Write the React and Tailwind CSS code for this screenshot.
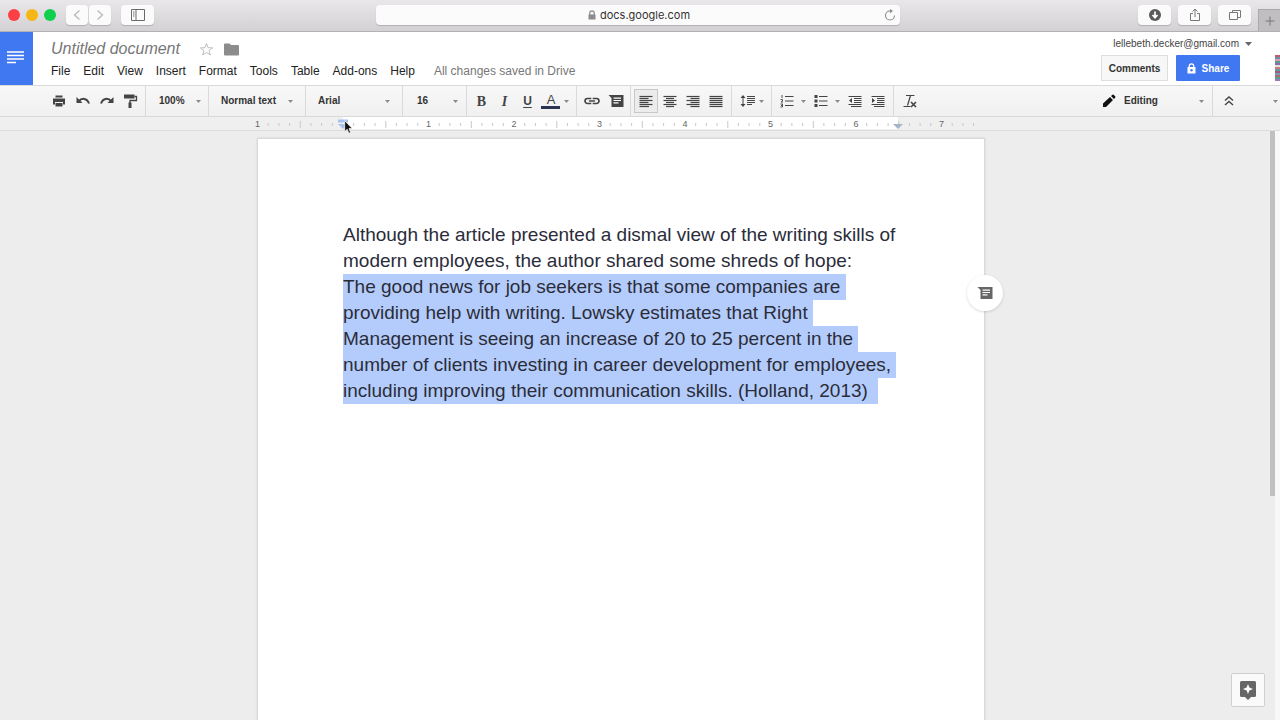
import React from "react";

const Caret = ({ className = "" }) => (
  <svg width="5" height="3" viewBox="0 0 5 3" className={"shrink-0 " + className} aria-hidden="true">
    <path d="M0 0h5L2.5 3z" fill="#8a8a8a" />
  </svg>
);

const Icon = ({ children, size = 16 }) => (
  <svg width={size} height={size} viewBox="0 0 16 16" fill="none" stroke="#444" aria-hidden="true" className="shrink-0">
    {children}
  </svg>
);

const Lines = ({ rows }) => (
  <Icon>
    {rows.map(([x1, x2], i) => (
      <path key={i} d={`M${x1} ${3.5 + i * 2}H${x2}`} strokeWidth="1.2" />
    ))}
  </Icon>
);

const alignLeft = [[1.5, 14.5], [1.5, 10.5], [1.5, 14.5], [1.5, 10.5], [1.5, 14.5], [1.5, 11]];
const alignCenter = [[1.5, 14.5], [4, 12], [1.5, 14.5], [4, 12], [1.5, 14.5], [4, 12]];
const alignRight = [[1.5, 14.5], [5.5, 14.5], [1.5, 14.5], [5.5, 14.5], [1.5, 14.5], [5.5, 14.5]];
const alignJustify = [[1.5, 14.5], [1.5, 14.5], [1.5, 14.5], [1.5, 14.5], [1.5, 14.5], [1.5, 14.5]];

const Tool = ({ label, children, className = "w-[23px]" }) => (
  <button type="button" aria-label={label} className={"flex h-6 shrink-0 items-center justify-center text-[#444] " + className}>
    {children}
  </button>
);

const Group = ({ children, className = "" }) => (
  <div className={"flex h-full shrink-0 items-center border-l border-[#dadada] " + className}>{children}</div>
);

const Pick = ({ label, value, className }) => (
  <Group className={className}>
    <select
      aria-label={label}
      defaultValue={value}
      className="min-w-0 flex-1 appearance-none bg-transparent text-[10px] font-bold leading-4 text-[#333] outline-none"
    >
      <option>{value}</option>
    </select>
    <Caret />
  </Group>
);

const CommentGlyph = ({ fill = "#444" }) => (
  <svg width="16" height="14" viewBox="0 0 16 14" aria-hidden="true">
    <path d="M.5 1H15.500V13H3.500V4z" fill={fill} />
    <path d="M5.500 4.200h7.500M5.500 6.500h7.500M5.500 8.800h5" stroke="#fff" strokeWidth="1.200" />
  </svg>
);

const Ruler = () => {
  const unit = 85.5;
  const ticks = [];
  for (let i = -8; i <= 60; i++) {
    const x = 86 + (i * unit) / 8;
    if (i % 8 === 0 || x > 727) continue;
    const half = i % 4 === 0;
    ticks.push(<path key={i} d={`M${x.toFixed(1)} ${half ? 4 : 6}V${half ? 11 : 9}`} />);
  }
  return (
    <svg width="728" height="13" viewBox="0 0 728 13" className="overflow-visible" aria-label="Ruler">
      <rect x="86" y="0" width="555" height="12" fill="#fff" />
      <g stroke="#c8c8c8">{ticks}</g>
      <g fill="#666" fontSize="9" textAnchor="middle" fontFamily="Liberation Sans, Arial, sans-serif">
        {[-1, 1, 2, 3, 4, 5, 6, 7].map((n) => (
          <text key={n} x={86 + n * unit} y="10">{Math.abs(n)}</text>
        ))}
      </g>
      <path d="M81 2.500h10v3H81z" fill="#a9c1ee" />
      <path d="M81 7h10l-5 5z" fill="#a9c1ee" />
      <path d="M636 7h10l-5 5z" fill="#a3b5cb" />
    </svg>
  );
};

const menus = ["File", "Edit", "View", "Insert", "Format", "Tools", "Table", "Add-ons", "Help"];
const quote = [
  "The good news for job seekers is that some companies are ",
  "providing help with writing. Lowsky estimates that Right ",
  "Management is seeing an increase of 20 to 25 percent in the ",
  "number of clients investing in career development for employees, ",
  "including improving their communication skills. (Holland, 2013)  ",
];
const avatarStripes = ["#c25b6a", "#6a8fb0", "#d9a0a8", "#5b9a8b", "#8a6fb0", "#e8e0e0", "#d07a80", "#5f9ea0", "#a05a78", "#7a9ac0", "#b0686a", "#58a08c", "#9a7ab8"];

const chromeButton =
  "flex h-5 items-center justify-center rounded-[4px] bg-[#fbfbfb] shadow-[0_1px_1px_rgba(0,0,0,0.18)]";

function BrowserBar() {
  return (
    <div className="flex h-8 shrink-0 items-center justify-between border-b border-[#b3b1b3] bg-linear-to-b from-[#e9e7e9] to-[#d3d1d3]">
      <div className="mb-[2px] flex flex-1 items-center pl-2">
        <div className="flex gap-[6px]">
          <button type="button" aria-label="Close" className="size-3 rounded-full bg-[#fc3f44]" />
          <button type="button" aria-label="Minimize" className="size-3 rounded-full bg-[#f5b713]" />
          <button type="button" aria-label="Zoom" className="size-3 rounded-full bg-[#10cf4d]" />
        </div>
        <div className="ml-[10px] flex gap-px">
          <button type="button" aria-label="Back" className={chromeButton + " w-[22px]"}>
            <svg width="8" height="12" viewBox="0 0 8 12" fill="none" stroke="#b8b8b8" strokeWidth="1.300"><path d="M6.500 1.500 1.500 6l5 4.500" /></svg>
          </button>
          <button type="button" aria-label="Forward" className={chromeButton + " w-[22px]"}>
            <svg width="8" height="12" viewBox="0 0 8 12" fill="none" stroke="#b8b8b8" strokeWidth="1.300"><path d="M1.500 1.500 6.500 6l-5 4.500" /></svg>
          </button>
        </div>
        <button type="button" aria-label="Show sidebar" className={chromeButton + " ml-[10px] w-[33px]"}>
          <svg width="14" height="12" viewBox="0 0 14 12" fill="none" stroke="#6a6a6a"><path d="M.5.5h13v11H.5zM5 .5v11M2 3h1.500M2 5h1.500M2 7h1.500" /></svg>
        </button>
      </div>
      <div className="mb-[2px] flex h-5 w-[41%] items-center rounded-[4px] bg-[#fbfbfb] px-1 shadow-[0_1px_1px_rgba(0,0,0,0.18)]">
        <div className="flex flex-1 items-center justify-center gap-1 pl-4">
          <svg width="8" height="10" viewBox="0 0 8 10" aria-hidden="true">
            <path d="M1.800 5V3a2.200 2.200 0 0 1 4.400 0v2" fill="none" stroke="#8a8a8a" strokeWidth="1.200" />
            <path d="M.5 4.500h7v5h-7z" fill="#8a8a8a" />
          </svg>
          <input aria-label="Address" defaultValue="docs.google.com" className="w-[92px] bg-transparent font-['Inter',sans-serif] text-[11px] leading-4 text-[#333] outline-none" />
        </div>
        <button type="button" aria-label="Reload" className="flex size-3">
          <svg width="12" height="12" viewBox="0 0 12 12" fill="none" stroke="#8a8a8a" strokeWidth="1.100"><path d="M6 2a4.500 4.500 0 1 0 4.500 4.500" /><path d="M6 0l3 2-3 2.200z" fill="#8a8a8a" stroke="none" /></svg>
        </button>
      </div>
      <div className="flex h-full flex-1 items-center justify-end gap-[7px] pl-3">
        <button type="button" aria-label="Downloads" className={chromeButton + " mb-[2px] w-[33px]"}>
          <svg width="12" height="12" viewBox="0 0 12 12"><circle cx="6" cy="6" r="6" fill="#5a5a5a" /><path d="M6 2.500V8M3.500 6 6 8.700 8.500 6" fill="none" stroke="#fff" strokeWidth="1.700" /></svg>
        </button>
        <button type="button" aria-label="Share page" className={chromeButton + " mb-[2px] w-[33px]"}>
          <svg width="12" height="14" viewBox="0 0 12 14" fill="none" stroke="#777"><path d="M4 5.500H1.500v7h9v-7H8M6 9V1.500M3.500 3.500 6 1l2.500 2.500" /></svg>
        </button>
        <button type="button" aria-label="Show tabs" className={chromeButton + " mb-[2px] w-[33px]"}>
          <svg width="12" height="12" viewBox="0 0 12 12" fill="none" stroke="#777"><path d="M.5 3.500h8v7h-8zM3.500 3.500v-2h8v7h-3" /></svg>
        </button>
        <button type="button" aria-label="New tab" className="flex h-[22px] w-[22px] items-center justify-center self-end border-l border-t border-[#aaa8aa] bg-[#c0bec0]">
          <svg width="10" height="10" viewBox="0 0 10 10" fill="none" stroke="#777"><path d="M5 .5v9M.5 5h9" /></svg>
        </button>
      </div>
    </div>
  );
}

function DocsHeader() {
  return (
    <header className="flex h-[53px] shrink-0 bg-white">
      <a href="#home" aria-label="Docs home" className="flex w-[33px] shrink-0 justify-center bg-[#4078f2] pt-[19px] pr-[2px]">
        <svg width="17" height="14" viewBox="0 0 17 14" stroke="#fff" strokeWidth="1.600"><path d="M0 1h17M0 4.500h17M0 8h17M0 11.500h9" /></svg>
      </a>
      <div className="flex flex-1 flex-col pl-[18px] pt-[7px]">
        <div className="flex h-5 items-center">
          <input aria-label="Document title" defaultValue="Untitled document" className="w-[148px] bg-transparent text-[16px] italic leading-5 text-[#777] outline-none" />
          <button type="button" aria-label="Star">
            <svg width="15" height="15" viewBox="0 0 15 15" fill="none" stroke="#bdbdbd"><path d="M7.500 1.500l1.600 4.200 4.500.2-3.500 2.800 1.200 4.300-3.800-2.500L3.700 13l1.200-4.300L1.400 5.900l4.500-.2z" /></svg>
          </button>
          <button type="button" aria-label="Move to folder" className="ml-[10px]">
            <svg width="15" height="13" viewBox="0 0 15 13"><path d="M0 1.500Q0 .5 1 .5h4.500L7 2h7q1 0 1 1v8.500q0 1-1 1H1q-1 0-1-1z" fill="#8c8c8c" /></svg>
          </button>
        </div>
        <nav className="flex items-center gap-[13px] text-[12px] leading-6 text-[#222]">
          {menus.map((m) => (
            <button key={m} type="button">{m}</button>
          ))}
          <span className="ml-[6px] text-[#777]">All changes saved in Drive</span>
        </nav>
      </div>
      <div className="flex flex-col items-end pr-[23px] pt-1">
        <button type="button" className="flex items-center gap-[6px] text-[10px] leading-4 text-[#444]">
          lellebeth.decker@gmail.com
          <svg width="7" height="4" viewBox="0 0 7 4" aria-hidden="true"><path d="M0 0h7L3.500 4z" fill="#666" /></svg>
        </button>
        <div className="mr-3 mt-[3px] flex gap-2">
          <button type="button" className="h-[26px] w-[67px] border border-[#dedede] bg-[#f7f7f7] text-[10px] font-bold text-[#333]">Comments</button>
          <button type="button" className="flex h-[26px] w-16 items-center justify-center gap-[6px] rounded-[1px] bg-[#4078f2] text-[10px] font-bold text-white">
            <svg width="9" height="11" viewBox="0 0 9 11" aria-hidden="true"><path d="M2.300 5V3a2.200 2.200 0 0 1 4.400 0v2" fill="none" stroke="#fff" strokeWidth="1.200" /><path d="M.5 4h8v6.500h-8z" fill="#fff" /><circle cx="4.500" cy="7.200" r="1.200" fill="#4078f2" /></svg>
            Share
          </button>
        </div>
      </div>
      <button type="button" aria-label="Account" className="flex w-[5px] shrink-0 pt-[23px]">
        <svg width="5" height="26" viewBox="0 0 5 26" aria-hidden="true">
          {avatarStripes.map((color, i) => (
            <path key={i} d={`M0 ${i * 2}h5v2H0z`} fill={color} />
          ))}
        </svg>
      </button>
    </header>
  );
}

function Toolbar() {
  return (
    <div role="toolbar" aria-label="Formatting" className="flex h-8 shrink-0 items-center border-y border-[#d9d9d9] bg-linear-to-b from-[#f8f8f8] to-[#f0f0f0]">
      <div className="flex w-[145px] shrink-0 pl-[47px]">
        <Tool label="Print" className="w-6">
          <Icon><path d="M4.500 2.500h7v2h-7z" fill="#444" stroke="none" /><path d="M2 5.500h12v6h-2V9H4v2.500H2z" fill="#444" stroke="none" /><path d="M4.500 10h7v3.500h-7z" fill="#444" stroke="none" /></Icon>
        </Tool>
        <Tool label="Undo" className="w-6">
          <Icon><path d="M1.500 4v6h6z" fill="#444" stroke="none" /><path d="M3.500 8.500C7 4.500 12 5 14 10.500" strokeWidth="2" /></Icon>
        </Tool>
        <Tool label="Redo" className="w-6">
          <Icon><path d="M14.500 4v6h-6z" fill="#444" stroke="none" /><path d="M12.500 8.500C9 4.500 4 5 2 10.500" strokeWidth="2" /></Icon>
        </Tool>
        <Tool label="Paint format" className="w-6">
          <Icon><path d="M1 1.500h10.500v4H1z" fill="#444" stroke="none" /><path d="M11.500 3.500h2v4H7V10" strokeWidth="1.300" /><path d="M5.500 9.500h3V15h-3z" fill="#444" stroke="none" /></Icon>
        </Tool>
      </div>
      <Pick label="Zoom level" value="100%" className="w-[63px] pl-[13px] pr-[7px]" />
      <Pick label="Styles" value="Normal text" className="w-[97px] pl-3 pr-3" />
      <Pick label="Font" value="Arial" className="w-[97px] pl-3 pr-3" />
      <Pick label="Font size" value="16" className="w-16 pl-[14px] pr-2" />
      <Group className="w-[110px] pl-[3px] font-['Liberation_Serif',serif] text-[14px]">
        <Tool label="Bold"><span className="font-black">B</span></Tool>
        <Tool label="Italic"><span className="font-bold italic">I</span></Tool>
        <Tool label="Underline"><span className="font-['Liberation_Sans',sans-serif] text-[12px] font-bold underline underline-offset-2">U</span></Tool>
        <Tool label="Text color" className="w-8 gap-[3px]">
          <svg width="20" height="18" viewBox="0 0 20 18"><text x="10" y="12" textAnchor="middle" fontSize="13" fill="#444" fontFamily="Liberation Sans, Arial, sans-serif">A</text><path d="M0 14h19v3H0z" fill="#2b3350" /></svg>
          <Caret />
        </Tool>
      </Group>
      <Group className="w-[54px] pl-[3px]">
        <Tool label="Insert link" className="w-6">
          <Icon><path d="M7.300 5.500H3.500a2.500 2.500 0 0 0 0 5h3.800M8.700 5.500h3.800a2.500 2.500 0 0 1 0 5H8.700M5 8h6" strokeWidth="1.700" /></Icon>
        </Tool>
        <Tool label="Insert comment" className="w-6"><CommentGlyph /></Tool>
      </Group>
      <Group className="w-[101px] pl-[3px]">
        <Tool label="Align left" className="w-6 border border-[#c8c8c8] bg-[#ececec]"><Lines rows={alignLeft} /></Tool>
        <Tool label="Align center"><Lines rows={alignCenter} /></Tool>
        <Tool label="Align right"><Lines rows={alignRight} /></Tool>
        <Tool label="Justify"><Lines rows={alignJustify} /></Tool>
      </Group>
      <Group className="w-10 pl-[7px]">
        <Tool label="Line spacing" className="w-[26px] gap-[3px]">
          <Icon><path d="M3 3v10M7 3.500h8M7 5.500h8M7 7.500h8M7 9.500h8M7 11.500h5" /><path d="M.5 5 3 2l2.500 3zM.5 11 3 14l2.500-3z" fill="#444" stroke="none" /></Icon>
          <Caret />
        </Tool>
      </Group>
      <Group className="w-[122px] pl-[3px]">
        <Tool label="Numbered list" className="w-[34px] gap-[6px]">
          <Icon><path d="M6 3.500h8.500M6 8h8.500M6 12.500h8.500" /><path d="M3 2v3M1.500 6.500h2v1.500l-1.500 1h2M1.500 11h2v3h-2M2 12.500h1.500" strokeWidth=".9" /></Icon>
          <Caret />
        </Tool>
        <Tool label="Bulleted list" className="w-[34px] gap-[6px]">
          <Icon><path d="M6 3.500h8.500M6 8h8.500M6 12.500h8.500" /><path d="M1.500 2h3v3h-3zM1.500 6.500h3v3h-3zM1.500 11h3v3h-3z" fill="#444" stroke="none" /></Icon>
          <Caret />
        </Tool>
        <Tool label="Decrease indent">
          <Icon><path d="M1.500 3.500h13M7 5.500h7.500M7 7.500h7.500M7 9.500h7.500M1.500 11.500h13M4 13.500h10.500" /><path d="M5 5v5L2 7.500z" fill="#444" stroke="none" /></Icon>
        </Tool>
        <Tool label="Increase indent">
          <Icon><path d="M1.500 3.500h13M7 5.500h7.500M7 7.500h7.500M7 9.500h7.500M1.500 11.500h13M4 13.500h10.500" /><path d="M2 5v5l3-2.500z" fill="#444" stroke="none" /></Icon>
        </Tool>
      </Group>
      <Group className="pl-1">
        <Tool label="Clear formatting">
          <Icon><path d="M4 2.500h8.500M8.500 2.500 5.500 12.500M1.500 13.500h7" strokeWidth="1.200" /><path d="M9 9l5 5M14 9l-5 5" strokeWidth="1.600" /></Icon>
        </Tool>
      </Group>
      <div className="ml-auto flex h-full shrink-0 items-center">
        <label className="flex h-full w-[110px] items-center gap-2 pr-2">
          <svg width="14" height="14" viewBox="0 0 14 14" className="shrink-0" aria-hidden="true"><path d="M1 13v-3.500L8 3l3 3-7 7zM9 2l1.500-1.300q.6-.4 1.200.1l1.600 1.600q.4.500 0 1L12 5z" fill="#111" /></svg>
          <select aria-label="Mode" defaultValue="Editing" className="min-w-0 flex-1 appearance-none bg-transparent text-[10px] font-bold leading-4 text-[#333] outline-none">
            <option>Editing</option>
          </select>
          <Caret />
        </label>
        <Group className="w-[68px] justify-between pl-1">
          <Tool label="Hide the menus">
            <Icon><path d="M4 7.500 8 4l4 3.500M4 12 8 8.500 12 12" strokeWidth="1.400" /></Icon>
          </Tool>
          <Caret className="mr-[2px]" />
        </Group>
      </div>
    </div>
  );
}

export default function App() {
  return (
    <div className="flex h-screen flex-col overflow-hidden bg-[#ededed] font-['Liberation_Sans',Arial,sans-serif]">
      <BrowserBar />
      <DocsHeader />
      <Toolbar />
      <div className="flex h-[14px] shrink-0 justify-center border-b border-[#dcdcdc] bg-[#efefef] pr-[38px]">
        <div className="relative">
          <Ruler />
          <svg width="9" height="14" viewBox="0 0 9 14" className="absolute left-[87px] top-[3px] z-10" aria-hidden="true">
            <path d="M.7.7v10.800L3.200 9.200l1.700 4 1.700-.7-1.600-3.900h3.300z" fill="#111" stroke="#fff" strokeWidth=".7" />
          </svg>
        </div>
      </div>
      <div className="flex min-h-0 flex-1">
        <main className="flex flex-1 justify-center pr-7 pt-[7px]">
          <div className="relative w-[728px] border border-b-0 border-[#dadada] bg-white px-[85px] pt-[83px] shadow-[0_0_2px_rgba(0,0,0,0.12)]">
            <div className="whitespace-pre text-[19px] leading-[26px] text-[#2b2c3a]">
              <p>Although the article presented a dismal view of the writing skills of</p>
              <p>modern employees, the author shared some shreds of hope:</p>
              {quote.map((line) => (
                <p key={line}><span className="inline-block h-[26px] bg-[#b4ccfb] align-top">{line}</span></p>
              ))}
            </div>
            <button type="button" aria-label="Add comment" className="absolute -right-[19px] top-[136px] flex size-9 items-center justify-center rounded-full bg-white shadow-[0_1px_3px_rgba(0,0,0,0.15)]">
              <CommentGlyph fill="#666" />
            </button>
          </div>
        </main>
        <div className="flex w-[10px] shrink-0">
          <div className="h-[62%] w-[5px] bg-[#c0c0c0]" />
          <div className="ml-auto w-[5px] bg-[#f8f8f8]" />
        </div>
      </div>
      <button type="button" aria-label="Explore" className="fixed bottom-[13px] right-[15px] flex size-[34px] items-center justify-center rounded-[2px] border border-[#cfcfcf] bg-[#fafafa]">
        <svg width="16" height="19" viewBox="0 0 16 19"><path d="M1.500 0h13Q16 0 16 1.500v13q0 1.500-1.500 1.500H11l-3 3-3-3H1.500Q0 16 0 14.500v-13Q0 0 1.500 0z" fill="#666" /><path d="M8 3l1.400 3.600L13 8 9.400 9.400 8 13 6.600 9.400 3 8l3.600-1.400z" fill="#fff" /></svg>
      </button>
    </div>
  );
}
